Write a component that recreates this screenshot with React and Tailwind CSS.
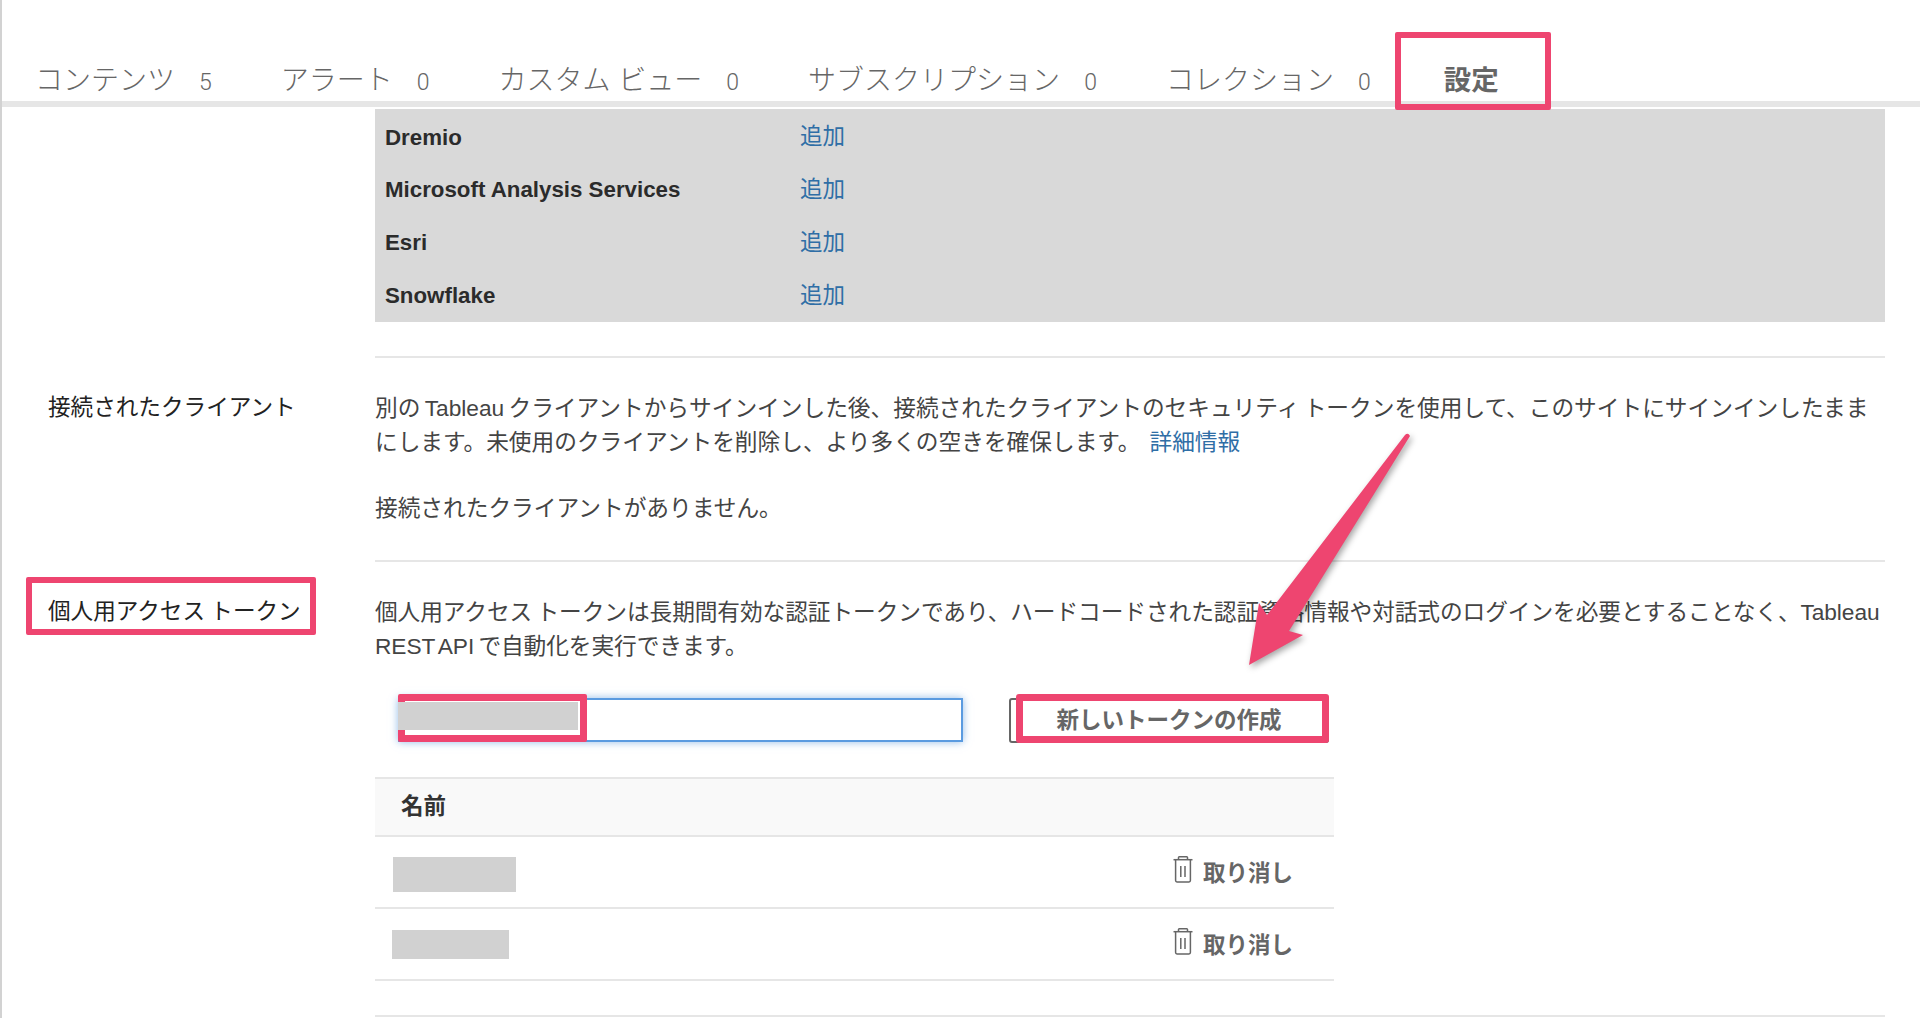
const font = "font-['Liberation_Sans','Noto_Sans_CJK_JP',sans-serif]";

const tabs = [
  { label: 'コンテンツ', count: 5 },
  { label: 'アラート', count: 0 },
  { label: 'カスタム ビュー', count: 0 },
  { label: 'サブスクリプション', count: 0 },
  { label: 'コレクション', count: 0 },
];

const sources = ['Dremio', 'Microsoft Analysis Services', 'Esri', 'Snowflake'];

function Trash() {
  return (
    <svg viewBox="0 0 20 27" className="w-[20px] h-[27px] mb-[10px] mr-[10px] shrink-0" fill="none" stroke="#666" strokeWidth="1.5">
      <path d="M5.5 3.5V1.6q0-.8.8-.8h7.4q.8 0 .8.8v1.9" />
      <path d="M.5 3.7h19" />
      <path d="M2.6 4v20.6q0 1.4 1.4 1.4h12q1.4 0 1.4-1.4V4" />
      <path d="M7.8 10v11M12 10v11" />
    </svg>
  );
}

function TokenRow({ blockClass }) {
  return (
    <div className="flex items-center justify-between h-[72px] border-b-2 border-[#e6e6e6] pr-[41px]">
      <div className={`bg-[#d1d1d1] ${blockClass}`} />
      <div className="flex items-center pt-[4px] text-[22.5px] font-bold text-[#666]">
        <Trash />
        <span className="leading-[34px]">取り消し</span>
      </div>
    </div>
  );
}

export default function App() {
  return (
    <div className={`relative h-[1018px] w-[1920px] overflow-hidden bg-white border-l-2 border-[#d2d2d2] ${font}`}>
      {/* Tabs */}
      <div className="flex items-baseline gap-[69px] h-[101px] pl-[33px] pt-[61px] text-[#666] whitespace-nowrap">
        {tabs.map((t) => (
          <div key={t.label} className="flex items-baseline gap-[24px]">
            <span className="text-[28px] leading-[40px] font-light">{t.label}</span>
            <span className="font-['Roboto',sans-serif] text-[23px] leading-[40px] font-light">{t.count}</span>
          </div>
        ))}
        <span className="ml-[4px] text-[27.5px] leading-[40px] font-bold">設定</span>
      </div>
      <div className="h-[6px] bg-[#e6e6e6]" />

      {/* Settings body */}
      <div className="pl-[373px] pt-[2px]">
        <div className="w-[1510px] h-[213px] bg-[#d9d9d9] pt-[2px]">
          {sources.map((s) => (
            <div key={s} className="flex items-center h-[52.7px] pl-[10px]">
              <span className="w-[415px] text-[22.3px] font-bold text-[#2b2b2b]">{s}</span>
              <span className="text-[22.5px] text-[#2f6ea6]">追加</span>
            </div>
          ))}
        </div>
        <div className="w-[1510px] h-[2px] bg-[#e6e6e6] mt-[34px]" />

        {/* Connected clients */}
        <div className="relative w-[1510px] pt-[33px] pb-[35px] text-[22.7px] leading-[34px] text-[#444] whitespace-nowrap [word-spacing:-2px]">
          <div className="absolute left-[-327px] top-[33px] text-[22.6px] text-[#222]">接続されたクライアント</div>
          <p>
            別の Tableau クライアントからサインインした後、接続されたクライアントのセキュリティ トークンを使用して、このサイトにサインインしたまま
            <br />
            にします。未使用のクライアントを削除し、より多くの空きを確保します。
            <a className="ml-[9px] text-[#2f6ea6]">詳細情報</a>
          </p>
          <p className="mt-[32px]">接続されたクライアントがありません。</p>
        </div>
        <div className="w-[1510px] h-[2px] bg-[#e6e6e6]" />

        {/* Personal access tokens */}
        <div className="relative w-[1510px] pt-[33px] text-[22.7px] leading-[34px] text-[#444] whitespace-nowrap [word-spacing:-2px]">
          <div className="absolute left-[-327px] top-[33px] text-[22.6px] text-[#222] [word-spacing:-1px]">個人用アクセス トークン</div>
          <p className="tracking-[-0.07px]">
            個人用アクセス トークンは長期間有効な認証トークンであり、ハードコードされた認証資格情報や対話式のログインを必要とすることなく、Tableau
            <br />
            REST API で自動化を実行できます。
          </p>

          <div className="flex mt-[35px] ml-[23px]">
            <input
              readOnly
              className="w-[565px] h-[44px] border-2 border-[#5a9be0] bg-white shadow-[0_0_8px_rgba(74,144,217,0.6)] outline-none"
            />
            <button className="w-[320px] h-[45px] ml-[46px] border-2 border-[#666] rounded-[3px] text-[22.5px] font-bold text-[#666]">
              新しいトークンの作成
            </button>
          </div>

          <div className="w-[959px] mt-[34px] border-t-2 border-[#e6e6e6]">
            <div className="flex items-center h-[58px] pl-[26px] bg-[#f9f9f9] border-b-2 border-[#e6e6e6] text-[22.5px] font-bold text-[#333]">
              名前
            </div>
            <TokenRow blockClass="w-[123px] h-[35px] ml-[18px] mt-[5px]" />
            <TokenRow blockClass="w-[117px] h-[29px] ml-[17px]" />
          </div>
          <div className="h-[2px] bg-[#e6e6e6] mt-[34px]" />
        </div>
      </div>

      {/* Annotations drawn over the page */}
      <div className="absolute left-[1393px] top-[32px] w-[156px] h-[78px] border-[6px] border-[#ee4570] rounded-[2px]" />
      <div className="absolute left-[24px] top-[577px] w-[290px] h-[58px] border-[6px] border-[#ee4570] rounded-[2px]" />
      <div className="absolute left-[396px] top-[694px] w-[189px] h-[48px] border-[7px] border-[#ee4570] rounded-[2px]" />
      <div className="absolute left-[396px] top-[702px] w-[180px] h-[28px] bg-[#d1d1d1]" />
      <div className="absolute left-[1014px] top-[694px] w-[313px] h-[49px] border-[7px] border-[#ee4570] rounded-[3px]" />

      <svg className="absolute left-0 top-0 w-[1920px] h-[1018px] pointer-events-none drop-shadow-[2px_3px_3px_rgba(0,0,0,0.35)]" viewBox="2 0 1920 1018">
        <path
          d="M1405 435 Q1408 432 1410 436 L1289 631 L1303 635 L1249 665 L1259 603 L1267 615 Z"
          fill="#ee4570"
        />
      </svg>
    </div>
  );
}
